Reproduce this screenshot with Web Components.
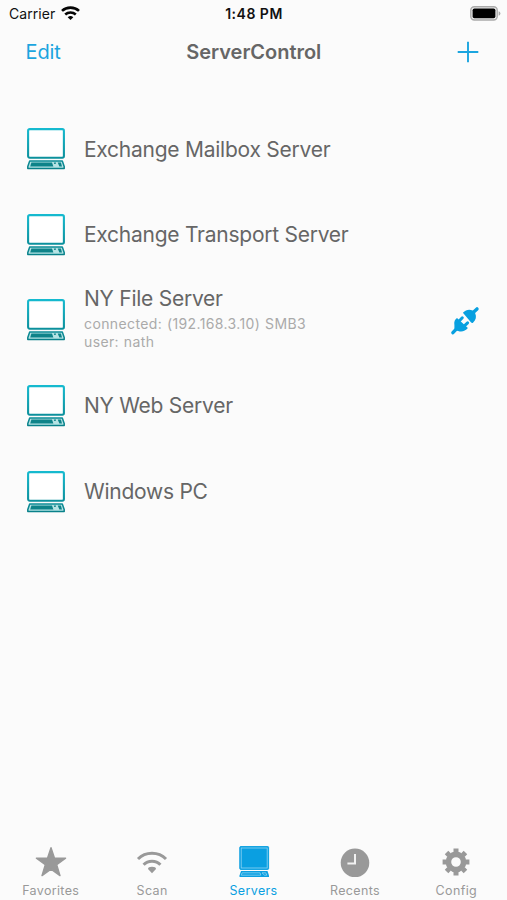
<!DOCTYPE html>
<html lang="en">
<head>
<meta charset="utf-8">
<title>ServerControl</title>
<style>
html,body{margin:0;height:100%;background:#fbfbfb}
body{font-family:Inter,"Liberation Sans",sans-serif;overflow:hidden}
</style>
</head>
<body>
<server-app></server-app>
<script>
const define = (name, html, setup) => {
  const t = document.createElement('template');
  t.innerHTML = html;
  customElements.define(name, class extends HTMLElement {
    constructor() {
      super();
      this.attachShadow({mode: 'open'}).append(t.content.cloneNode(true));
    }
    connectedCallback() { if (setup) setup(this, this.shadowRoot); }
  });
};

const icons = {
  pc: `<svg width="40" height="43" viewBox="0 0 40 43"><defs><linearGradient id="g" x1="0" y1="0" x2="0" y2="43" gradientUnits="userSpaceOnUse"><stop offset="0" stop-color="#16bcd2"/><stop offset="1" stop-color="#087f87"/></linearGradient></defs>
    <rect x="2.1" y="2.1" width="35.8" height="28.6" rx="1.6" fill="#fff" stroke="url(#g)" stroke-width="2.1"/>
    <path d="M3.7 34H36.3L38.2 39.6V41.4H1.8V39.6Z" fill="#b5e3e4" stroke="url(#g)" stroke-width="1.5" stroke-linejoin="round"/>
    <path d="M5.4 35.6H26L27.4 39.4H4.2Z" fill="#0d8389"/><path d="M27.8 35.6H30.2L29.5 37.1H28.3ZM31.7 35.6H34.9L36 39.4H33.4Z" fill="#0d8389"/></svg>`,
  plug: `<svg width="30" height="30" viewBox="0 0 30 30" fill="#08a0e0"><path d="M2.9 26.7L6 23.4" stroke="#08a0e0" stroke-width="3.4" stroke-linecap="round"/><path d="M4.4 19.2C3.8 15.8 4.9 13.6 7 12.1L17.9 22C15.4 25.2 11.3 26.4 8.2 24.9L5.8 24.4L4.4 22.4Z"/><path d="M9.2 15L12.3 11.8M14.4 19.9L17.6 16.8" stroke="#08a0e0" stroke-width="3" stroke-linecap="round"/><path d="M12.9 6.7C15.9 3.5 19.7 2.9 22.6 4.6L25.1 7.1C26.8 10.7 26 14 23 16.7Q21.8 17.3 20.9 16.2Z"/><path d="M23.7 6L27 2.9" stroke="#08a0e0" stroke-width="3.4" stroke-linecap="round"/></svg>`,
  plus: `<svg width="22" height="22" viewBox="0 0 22 22"><path d="M11 .7V21.3M.7 11H21.3" stroke="#1ba5df" stroke-width="1.9"/></svg>`,
  wifi: `<svg width="19" height="15" viewBox="0 0 19 15" fill="none" stroke="#050505" stroke-width="2.6"><path d="M1 4.9C5.6.5 13.4.5 18 4.9M4.2 8.5C7.2 5.8 11.8 5.8 14.8 8.5"/><path d="M9.5 14L6.7 11.2Q9.5 9 12.3 11.2Z" fill="#050505" stroke="none"/></svg>`,
  battery: `<svg width="31" height="15" viewBox="0 0 31 15"><rect x=".8" y=".8" width="26.4" height="13.2" rx="3.5" fill="#eee" stroke="#aaa" stroke-width="1.4"/><rect x="2.6" y="2.5" width="22.8" height="9.8" rx="1.8" fill="#000"/><path d="M28.6 5.2Q30.4 5.7 30.4 7.4T28.6 9.7Z" fill="#aaa"/></svg>`,
  star: `<svg width="32" height="32" viewBox="0 0 32 32"><path d="M16 1.6L19.5 12.1L30.6 12.1L21.7 18.8L25 29.6L16 23.1L7 29.6L10.3 18.8L1.4 12.1L12.5 12.1Z" fill="#999" stroke="#999" stroke-width="1.4" stroke-linejoin="round"/></svg>`,
  scan: `<svg width="32" height="32" viewBox="0 0 32 32" fill="none" stroke="#999" stroke-width="3"><path d="M2 13C9.5 5.4 22.5 5.4 30 13M7.6 18.8C12 14.2 20 14.2 24.4 18.8"/><path d="M16 27.2L12 23Q12 20.8 16 20.8T20 23Z" fill="#999" stroke="none"/></svg>`,
  monitor: `<svg width="32" height="32" viewBox="0 0 32 32"><rect x="1.8" y=".6" width="28.8" height="22.8" rx=".8" fill="#0a9fe1" stroke="#0a9fe1"/><rect x="3.2" y="2" width="26" height="20" fill="none" stroke="#8fd4f2" stroke-width=".8"/><path d="M3 25.1H29.5L31 29.4V31H1.5V29.4Z" fill="#0a9fe1"/><path d="M4.1 26.8H22.1L22.7 29.2H3.2ZM24 26.8H27.8L28.8 29.2H26.5Z" fill="none" stroke="#9cd9f3" stroke-width=".7"/></svg>`,
  clock: `<svg width="32" height="32" viewBox="0 0 32 32"><circle cx="16" cy="16.8" r="14.3" fill="#999"/><path d="M16 8V17.6H8.4" fill="none" stroke="#f2f2f2" stroke-width="2"/></svg>`,
  gear: `<svg width="32" height="32" viewBox="0 0 32 32" fill="none" stroke="#999"><circle cx="16" cy="16" r="7.6" stroke-width="5.6"/><path d="M16 2.6V6.4M16 25.6V29.4M2.6 16H6.4M25.6 16H29.4M6.53 6.53L9.2 9.2M22.8 22.8L25.47 25.47M6.53 25.47L9.2 22.8M22.8 9.2L25.47 6.53" stroke-width="5"/></svg>`
};

define('ui-icon', `<style>:host{display:block;line-height:0}svg{display:block}</style><span></span>`,
  (el, root) => root.querySelector('span').innerHTML = icons[el.getAttribute('name')]);

define('status-bar', `<style>
:host{display:grid;grid-template-columns:1fr auto 1fr;height:27px;align-items:center;padding:0 6px 0 9px;color:#111;font-size:14px}
.l{display:flex;align-items:center;gap:6px;letter-spacing:.05px}.t{font-weight:600;letter-spacing:.5px;margin-left:-2px}ui-icon{justify-self:end}
.l ui-icon{margin-top:-1px}
</style><div class="l"><span>Carrier</span><ui-icon name="wifi"></ui-icon></div><span class="t"><slot></slot></span><ui-icon name="battery"></ui-icon>`);

define('nav-bar', `<style>
:host{display:grid;grid-template-columns:1fr auto 1fr;height:50px;align-items:center;padding:0 28px 0 25.5px;box-sizing:border-box;color:#666}
.e{font-size:20px;color:#1ba5df;letter-spacing:-.1px}h1{margin:0 0 0 3px;font-size:20px;font-weight:600;letter-spacing:-.02px}ui-icon{justify-self:end}
</style><span class="e">Edit</span><h1><slot></slot></h1><ui-icon name="plus"></ui-icon>`);

define('server-row', `<style>
:host{display:flex;height:85.6px;align-items:center;padding:0 27px 0 26px;box-sizing:border-box}
.x{flex:1;margin-left:18px;color:#666}.n{font-size:21px;line-height:28px;letter-spacing:-.25px;padding-top:1.6px}
.d{display:block;font-size:14px;line-height:18px;color:#aaa;letter-spacing:.38px;word-spacing:.5px}
:host([connected]) .n{padding-top:1px}
:host([connected]) .d{padding:2px 0 4.5px}
::slotted(span){display:block}
::slotted(ui-icon){padding-top:2px}
</style><ui-icon name="pc"></ui-icon><div class="x"><div class="n"><slot></slot></div><div class="d"><slot name="detail"></slot></div></div><slot name="status"></slot>`);

define('tab-item', `<style>
:host{flex:1;display:flex;flex-direction:column;align-items:center;color:#999;font-size:12.5px;letter-spacing:.35px}
:host([active]){color:#0a9fe1}
span{line-height:16px;margin-top:5px}
</style><ui-icon></ui-icon><span><slot></slot></span>`, (el, root) => {
  const i = document.createElement('ui-icon');
  i.setAttribute('name', el.getAttribute('icon'));
  root.querySelector('ui-icon').replaceWith(i);
});

define('tab-bar', `<style>:host{display:flex;height:54px}</style><slot></slot>`);

define('server-app', `<style>
:host{display:flex;flex-direction:column;width:507px;height:900px;background:#fbfbfb}
main{flex:1;padding-top:29px}
</style>
<status-bar>1:48 PM</status-bar>
<nav-bar>ServerControl</nav-bar>
<main>
<server-row>Exchange Mailbox Server</server-row>
<server-row>Exchange Transport Server</server-row>
<server-row connected>NY File Server<span slot="detail">connected: (192.168.3.10) SMB3</span><span slot="detail">user: nath</span><ui-icon slot="status" name="plug"></ui-icon></server-row>
<server-row>NY Web Server</server-row>
<server-row>Windows PC</server-row>
</main>
<tab-bar>
<tab-item icon="star">Favorites</tab-item><tab-item icon="scan">Scan</tab-item><tab-item icon="monitor" active>Servers</tab-item><tab-item icon="clock">Recents</tab-item><tab-item icon="gear">Config</tab-item>
</tab-bar>`);
</script>
</body>
</html>
